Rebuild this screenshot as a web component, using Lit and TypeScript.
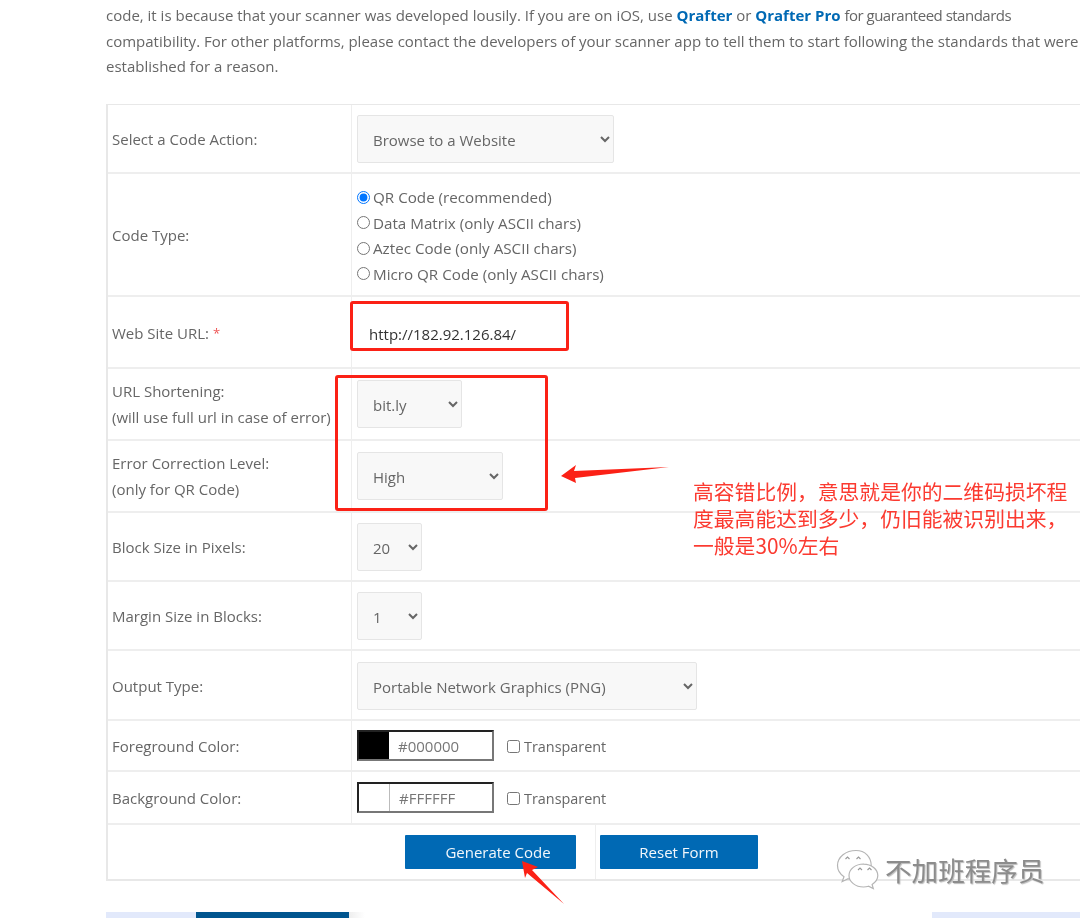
import { LitElement, html, css, svg } from "lit";
import { customElement } from "lit/decorators.js";

@customElement("app-root")
export class AppRoot extends LitElement {
  static styles = css`
    :host {
      display: block;
      position: relative;
      width: 1080px;
      height: 918px;
      overflow: hidden;
      background: #fff;
      font-family: "Open Sans", "Noto Sans CJK SC", sans-serif;
      font-size: 15px;
      color: #666;
    }
    .page {
      box-sizing: border-box;
      width: 1200px;
      height: 918px;
      padding: 3px 0 0 106px;
      border-left: 1px solid #f5f5f5;
      margin-left: -1px;
      display: flex;
      flex-direction: column;
      align-items: flex-start;
      filter: blur(0.35px);
    }
    .intro {
      margin: 0 0 24px;
      line-height: 25.5px;
      white-space: nowrap;
    }
    .intro a {
      color: #0069b4;
      font-weight: 700;
      text-decoration: none;
    }
    .tight {
      letter-spacing: -0.5px;
    }
    .form {
      display: grid;
      width: 1000px;
      grid-template-columns: 244px 1fr;
      grid-template-rows: 69px 123px 72px 72px 72px 69px 69px 70px 51px 53px 54px;
      border: 1px solid #e8e8e8;
      border-width: 1px 0 2px 2px;
      box-sizing: content-box;
    }
    .label,
    .field {
      display: flex;
      align-items: center;
      border-bottom: 2px solid #eee;
      box-sizing: border-box;
    }
    .label {
      padding: 4px 0 0 4px;
      line-height: 25.5px;
      border-right: 1px solid #eee;
    }
    .label > div {
      margin-top: -2px;
      white-space: nowrap;
    }
    .field {
      padding-left: 5px;
    }
    .req {
      color: #e55;
      margin-left: 4px;
      font-size: 13px;
    }
    select {
      box-sizing: border-box;
      height: 48px;
      padding: 2px 10px 0 11px;
      background-color: #f8f8f8;
      border: 1px solid #e5e5e5;
      border-radius: 2px;
      color: #666;
      font: inherit;
    }
    .w-action { width: 257px; margin-top: 2px; }
    .w-short { width: 105px; }
    .w-level { width: 146px; }
    .w-num { width: 65px; margin-top: 2px; }
    .w-out { width: 340px; margin-top: 2px; }
    .radios {
      display: flex;
      flex-direction: column;
      margin-top: 3px;
      font-size: 15.2px;
    }
    .radios label {
      display: flex;
      align-items: center;
      gap: 3px;
      height: 25.5px;
    }
    .radios input {
      margin: 0;
      width: 13px;
      height: 13px;
    }
    .url {
      color: #333;
      padding: 4px 0 0 17px;
    }
    .color {
      display: flex;
      align-items: stretch;
      box-sizing: border-box;
      width: 137px;
      height: 31px;
      border: 2px solid;
      border-color: #222 #777 #777 #222;
    }
    .swatch {
      width: 30px;
      border-right: 1px solid #bbb;
    }
    .swatch.black { background: #000; border-right: 0; }
    .hex {
      padding-left: 9px;
      line-height: 29px;
      color: #777;
    }
    .check {
      display: flex;
      align-items: center;
      gap: 4px;
      margin-left: 13px;
      padding-top: 3px;
      font-size: 14.4px;
    }
    .check input {
      margin: 0;
      width: 13px;
      height: 13px;
    }
    .actions {
      grid-column: 1 / -1;
      display: flex;
      align-items: center;
      padding-left: 297px;
    }
    .btn {
      height: 34px;
      border: 0;
      border-radius: 1px;
      background: #0069b4;
      color: #f2f7fb;
      font: inherit;
      padding: 0;
    }
    .gen { width: 171px; padding-left: 15px; }
    .sep {
      align-self: stretch;
      width: 1px;
      margin: 0 4px 0 19px;
      background: #eee;
    }
    .reset { width: 158px; }
    .tabs {
      position: absolute;
      left: 0;
      right: 0;
      top: 912px;
      height: 6px;
      display: flex;
    }
    .tab-a { margin-left: 106px; width: 90px; background: #e2e9fb; }
    .tab-b { width: 153px; background: #00558f; }
    .tab-c { width: 16px; background: linear-gradient(90deg, #eee, #fff); }
    .tab-d { margin-left: auto; width: 148px; background: #e2e9fb; }
    .marks {
      position: absolute;
      left: 0;
      top: 0;
      width: 1080px;
      height: 918px;
      pointer-events: none;
      filter: blur(0.3px);
    }
    .box {
      position: absolute;
      box-sizing: border-box;
      border: 3px solid #fb2116;
      border-radius: 3px;
    }
    .box-url { left: 350px; top: 301px; width: 219px; height: 50px; }
    .box-opts { left: 335px; top: 375px; width: 213px; height: 136px; }
    .note {
      position: absolute;
      left: 693px;
      top: 478px;
      width: 380px;
      font-family: "Noto Sans CJK SC", sans-serif;
      font-size: 20.8px;
      line-height: 27px;
      color: #fb3a30;
    }
    .mark {
      position: absolute;
      left: 885px;
      top: 853px;
      font-family: "Noto Sans CJK SC", sans-serif;
      font-size: 26.6px;
      line-height: 34px;
      color: #8c8c8c;
      white-space: nowrap;
      text-shadow: 1px 1px 1px #bbb;
    }
    svg {
      position: absolute;
      left: 0;
      top: 0;
    }
  `;

  private wechat() {
    return svg`
      <g fill="#fff" stroke="#b5b5b5" stroke-width="1.2">
        <path d="M856 850.5c-10 0-18.500 6.500-18.500 15 0 4.500 2.500 8.500 6.500 11.300l-1.800 4.700 6-2.800c2 .6 4 .9 6 .9 10 0 17-6.500 17-14.100 0-8.500-6-15-15.200-15z"/>
        <path d="M863.500 864c-8 0-14.500 5.200-14.500 11.500s6.500 11.500 14.500 11.500c1.800 0 3.500-.3 5-.8l4.800 2.400-1.200-4.100c3.400-2.200 5.700-5.300 5.700-8.900 0-6.300-6.300-11.500-14.300-11.500z"/>
      </g>
      <g fill="none" stroke="#999" stroke-width="1.100">
        <path d="M845.500 859l2-2 2 2M856.500 859l2-2 2 2M858 870l2-2 2 2M867.500 870l2-2 2 2"/>
      </g>`;
  }

  render() {
    return html`
      <div class="page">
        <p class="intro">
          code, it is because that your scanner was developed lousily. If you are on iOS, use <a>Qrafter</a> or <a>Qrafter Pro</a> <span class="tight">for guaranteed standards</span><br />
          compatibility. For other platforms, please contact the developers of your scanner app to tell them to start following the standards that were<br />
          established for a reason.
        </p>
        <div class="form">
          <div class="label">Select a Code Action:</div>
          <div class="field"><select class="w-action"><option>Browse to a Website</option></select></div>

          <div class="label">Code Type:</div>
          <div class="field">
            <div class="radios">
              <label><input type="radio" name="t" checked />QR Code (recommended)</label>
              <label><input type="radio" name="t" />Data Matrix (only ASCII chars)</label>
              <label><input type="radio" name="t" />Aztec Code (only ASCII chars)</label>
              <label><input type="radio" name="t" />Micro QR Code (only ASCII chars)</label>
            </div>
          </div>

          <div class="label">Web Site URL:<span class="req">*</span></div>
          <div class="field url">http://182.92.126.84/</div>

          <div class="label"><div>URL Shortening:<br />(will use full url in case of error)</div></div>
          <div class="field"><select class="w-short"><option>bit.ly</option></select></div>

          <div class="label"><div>Error Correction Level:<br />(only for QR Code)</div></div>
          <div class="field"><select class="w-level"><option>High</option></select></div>

          <div class="label">Block Size in Pixels:</div>
          <div class="field"><select class="w-num"><option>20</option></select></div>

          <div class="label">Margin Size in Blocks:</div>
          <div class="field"><select class="w-num"><option>1</option></select></div>

          <div class="label">Output Type:</div>
          <div class="field"><select class="w-out"><option>Portable Network Graphics (PNG)</option></select></div>

          <div class="label">Foreground Color:</div>
          <div class="field">
            <div class="color"><div class="swatch black"></div><div class="hex">#000000</div></div>
            <label class="check"><input type="checkbox" />Transparent</label>
          </div>

          <div class="label">Background Color:</div>
          <div class="field">
            <div class="color"><div class="swatch"></div><div class="hex">#FFFFFF</div></div>
            <label class="check"><input type="checkbox" />Transparent</label>
          </div>

          <div class="actions">
            <button class="btn gen">Generate Code</button>
            <div class="sep"></div>
            <button class="btn reset">Reset Form</button>
          </div>
        </div>
      </div>
      <div class="tabs">
        <div class="tab-a"></div><div class="tab-b"></div><div class="tab-c"></div><div class="tab-d"></div>
      </div>
      <div class="marks">
        <div class="box box-url"></div>
        <div class="box box-opts"></div>
        <div class="note">高容错比例，意思就是你的二维码损坏程<br />度最高能达到多少，仍旧能被识别出来，<br />一般是30%左右</div>
        <svg width="1080" height="918" viewBox="0 0 1080 918">
          <polygon points="561,476 576,465 574,471 669,467 575,478 576,483" fill="#fb2116" />
          <polygon points="522,861 538,867 532,870 564,904 527,873 525,878" fill="#fb2116" />
          ${this.wechat()}
        </svg>
        <div class="mark">不加班程序员</div>
      </div>
    `;
  }
}
